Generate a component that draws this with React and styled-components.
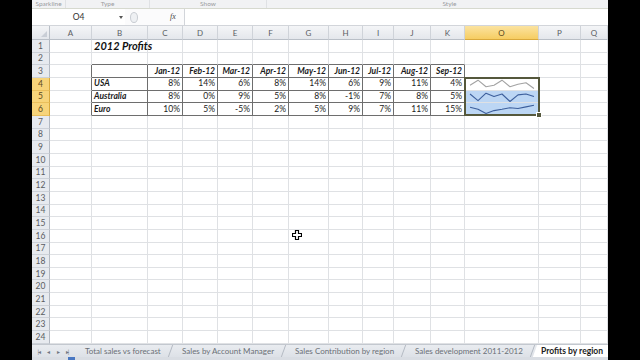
import React from 'react'
import styled, { createGlobalStyle, css } from 'styled-components'

const GlobalStyle = createGlobalStyle`
  html, body { margin: 0; padding: 0; background: #000; }
  body { font-family: Lato, 'Liberation Sans', sans-serif; }
`

const COLS = ['A', 'B', 'C', 'D', 'E', 'F', 'G', 'H', 'I', 'J', 'K', 'O', 'P', 'Q']
const WIDTHS = [42, 56, 35, 35, 35, 36, 40, 34, 31, 37, 34, 74, 42]
const ROW_COUNT = 24
const ROW_H = 12.67
const SPARK_COL = 11
const MONTHS = ['Jan-12', 'Feb-12', 'Mar-12', 'Apr-12', 'May-12', 'Jun-12', 'Jul-12', 'Aug-12', 'Sep-12']
const DATA = [
  { name: 'USA', values: [8, 14, 6, 8, 14, 6, 9, 11, 4], line: '#a3a3a3' },
  { name: 'Australia', values: [8, 0, 9, 5, 8, -1, 7, 8, 5], line: '#3d5f9c' },
  { name: 'Euro', values: [10, 5, -5, 2, 5, 9, 7, 11, 15], line: '#3d5f9c' }
]
const TABS = ['Total sales vs forecast', 'Sales by Account Manager', 'Sales Contribution by region', 'Sales development 2011-2012', 'Profits by region']

// table B3:K6 gets dark borders
const inTable = (r, c) => r >= 3 && r <= 6 && c >= 1 && c <= 10

const cellContent = (r, c) => {
  if (r === 1 && c === 1) return { text: '2012 Profits', title: true }
  if (r === 3 && c >= 2 && c <= 10) return { text: MONTHS[c - 2], head: true, align: 'right' }
  if (r >= 4 && r <= 6) {
    const row = DATA[r - 4]
    if (c === 1) return { text: row.name, head: true, align: 'left' }
    if (c >= 2 && c <= 10) return { text: row.values[c - 2] + '%', align: 'right' }
  }
  return null
}

const Sparkline = ({ values, color }) => {
  const w = 74
  const h = ROW_H
  const min = Math.min(...values)
  const max = Math.max(...values)
  const pts = values.map((v, i) => {
    const x = 5 + (i * (w - 10)) / (values.length - 1)
    const y = 2.2 + ((max - v) / (max - min)) * (h - 4.4)
    return `${x.toFixed(1)},${y.toFixed(1)}`
  })
  return (
    <SparkSvg width={w} height={h} viewBox={`0 0 ${w} ${h}`}>
      <polyline points={pts.join(' ')} fill='none' stroke={color} strokeWidth='1.1' strokeLinejoin='round' />
    </SparkSvg>
  )
}

export default function App() {
  const rows = []
  for (let r = 1; r <= ROW_COUNT; r++) {
    const active = r >= 4 && r <= 6
    rows.push(<RowHeader key={'h' + r} $active={active}>{r}</RowHeader>)
    COLS.forEach((col, c) => {
      const content = cellContent(r, c)
      const darkRight = inTable(r, c) || inTable(r, c + 1)
      const darkBottom = inTable(r, c) || inTable(r + 1, c)
      const spark = c === SPARK_COL && active ? DATA[r - 4] : null
      rows.push(
        <Cell
          key={r + col}
          $darkRight={darkRight}
          $darkBottom={darkBottom}
          $fill={c === SPARK_COL && (r === 5 || r === 6)}
          $align={content && content.align}
          $head={content && content.head}
          $title={content && content.title}
        >
          {content && content.text}
          {spark && <Sparkline values={spark.values} color={spark.line} />}
        </Cell>
      )
    })
  }

  return (
    <Screen>
      <GlobalStyle />
      <Window>
        <RibbonLabels>
          <RibbonGroup $w={34}>Sparkline</RibbonGroup>
          <RibbonGroup $w={84}>Type</RibbonGroup>
          <RibbonGroup $w={117}>Show</RibbonGroup>
          <RibbonGroup $w={366}>Style</RibbonGroup>
        </RibbonLabels>
        <FormulaBar>
          <NameBox>
            <span>O4</span>
            <DropArrow />
          </NameBox>
          <Grip />
          <Fx>fx</Fx>
          <FormulaInput />
        </FormulaBar>
        <Sheet>
          <Corner><CornerMark /></Corner>
          {COLS.map((col, c) => (
            <ColHeader key={col} $active={c === SPARK_COL}>{col}</ColHeader>
          ))}
          {rows}
          <Selection>
            <FillHandle />
          </Selection>
        </Sheet>
        <TabBar>
          <TabNav>
            <NavGlyph>|◂</NavGlyph>
            <NavGlyph>◂</NavGlyph>
            <NavGlyph>▸</NavGlyph>
            <NavGlyph>▸|</NavGlyph>
          </TabNav>
          {TABS.map((t, i) => (
            <Tab key={t} $active={i === TABS.length - 1}><span>{t}</span></Tab>
          ))}
        </TabBar>
        <StatusStrip>
          <StripMark />
        </StatusStrip>
      </Window>
      <Cursor width='10' height='10' viewBox='0 0 10 10'>
        <path d='M3.5 0.5 H6.5 V3.5 H9.5 V6.5 H6.5 V9.5 H3.5 V6.5 H0.5 V3.5 H3.5 Z' fill='#fff' stroke='#000' strokeWidth='1.2' />
      </Cursor>
    </Screen>
  )
}

const Screen = styled.div`
  position: relative;
  width: 640px;
  height: 360px;
  background: #000;
  display: flex;
  justify-content: center;
  overflow: hidden;
`
const Window = styled.div`
  width: 576px;
  height: 360px;
  display: flex;
  flex-direction: column;
  background: #fff;
  overflow: hidden;
`
const RibbonLabels = styled.div`
  height: 9px;
  flex: 0 0 9px;
  display: flex;
  background: #f1f2f4;
  border-bottom: 1px solid #d6d9cf;
  box-sizing: border-box;
`
const RibbonGroup = styled.div`
  flex: 0 0 ${props => props.$w}px;
  font-size: 6.5px;
  line-height: 8px;
  color: #9a9ca0;
  text-align: center;
  border-right: 1px solid #dfe1e4;
  box-sizing: border-box;
`
const FormulaBar = styled.div`
  height: 17px;
  flex: 0 0 17px;
  display: flex;
  align-items: stretch;
  background: #fbfbfc;
  border-bottom: 1px solid #d2d5da;
  box-sizing: border-box;
`
const NameBox = styled.div`
  width: 93px;
  display: flex;
  align-items: center;
  font-size: 8.5px;
  color: #333;
  background: #fff;
  span {
    flex: 1;
    text-align: center;
    padding-left: 6px;
  }
`
const DropArrow = styled.div`
  width: 0;
  height: 0;
  margin-right: 2px;
  border-left: 2.5px solid transparent;
  border-right: 2.5px solid transparent;
  border-top: 3px solid #555;
`
const Grip = styled.div`
  width: 6px;
  height: 9px;
  margin: 3px 0 0 5px;
  border: 1px solid #c8ccd2;
  border-radius: 50%;
  background: #eef0f3;
`
const Fx = styled.div`
  margin-left: 32px;
  width: 14px;
  font-family: 'Liberation Serif', serif;
  font-style: italic;
  font-size: 8px;
  line-height: 15px;
  color: #444;
`
const FormulaInput = styled.div`
  flex: 1;
  background: #fff;
  border-left: 1px solid #d2d5da;
`
const Sheet = styled.div`
  position: relative;
  flex: 0 0 318px;
  display: grid;
  grid-template-columns: 18px ${WIDTHS.map(w => w + 'px').join(' ')} 1fr;
  grid-template-rows: 14px repeat(${ROW_COUNT}, ${ROW_H}px);
  background: #fff;
`
const headerBase = css`
  box-sizing: border-box;
  font-size: 8px;
  color: #5a5d62;
  display: flex;
  align-items: center;
  justify-content: center;
`
const Corner = styled.div`
  ${headerBase};
  background: linear-gradient(#f3f4f6, #e3e6eb);
  border-right: 1px solid #b9bfc7;
  border-bottom: 1px solid #b9bfc7;
  position: relative;
`
const CornerMark = styled.div`
  position: absolute;
  right: 2px;
  bottom: 2px;
  width: 0;
  height: 0;
  border-left: 6px solid transparent;
  border-bottom: 6px solid #c9ced6;
`
const ColHeader = styled.div`
  ${headerBase};
  background: ${props => props.$active ? 'linear-gradient(#fbe3a0, #f6cd62)' : 'linear-gradient(#f4f5f7, #e4e7ec)'};
  color: ${props => props.$active ? '#5b4a1e' : '#5a5d62'};
  border-right: 1px solid #cfd3d9;
  border-bottom: 1px solid ${props => props.$active ? '#d9a93c' : '#b9bfc7'};
`
const RowHeader = styled.div`
  ${headerBase};
  font-size: 8.5px;
  background: ${props => props.$active ? '#f7d47a' : '#e7eaef'};
  color: ${props => props.$active ? '#5b4a1e' : '#5a5d62'};
  border-right: 1px solid ${props => props.$active ? '#d9a93c' : '#b3b9c2'};
  border-bottom: 1px solid ${props => props.$active ? '#e9bf5c' : '#ccd1d8'};
`
const Cell = styled.div`
  position: relative;
  box-sizing: border-box;
  min-width: 0;
  padding: 0 2px;
  font-size: 8.5px;
  line-height: 11px;
  color: #1a1a1a;
  white-space: nowrap;
  display: flex;
  align-items: center;
  justify-content: ${props => props.$align === 'right' ? 'flex-end' : 'flex-start'};
  background: ${props => props.$fill ? '#bcd6f4' : 'transparent'};
  border-right: 1px solid ${props => props.$darkRight ? '#6e6e6e' : '#dfe1e4'};
  border-bottom: 1px solid ${props => props.$darkBottom ? '#6e6e6e' : '#dfe1e4'};
  ${props => props.$head && css`
    font-weight: 700;
    font-style: italic;
  `}
  ${props => props.$title && css`
    font-size: 11px;
    font-weight: 700;
    font-style: italic;
    color: #111;
    overflow: visible;
    z-index: 1;
  `}
`
const SparkSvg = styled.svg`
  position: absolute;
  left: 0;
  top: 0;
`
const Selection = styled.div`
  position: absolute;
  grid-column: 13 / 14;
  grid-row: 5 / 8;
  top: -1px;
  left: -1px;
  right: -1px;
  bottom: 0;
  border: 2px solid #55583c;
  pointer-events: none;
  z-index: 2;
`
const FillHandle = styled.div`
  position: absolute;
  right: -4px;
  bottom: -4px;
  width: 4px;
  height: 4px;
  background: #55583c;
  border: 1px solid #fff;
`
const TabBar = styled.div`
  flex: 0 0 13px;
  display: flex;
  align-items: stretch;
  background: linear-gradient(#e9ecf0, #dde1e7);
  border-top: 1px solid #c3c8cf;
  box-sizing: border-box;
  overflow: hidden;
`
const TabNav = styled.div`
  flex: 0 0 42px;
  display: flex;
  align-items: center;
  justify-content: space-around;
  padding: 0 2px;
  box-sizing: border-box;
`
const NavGlyph = styled.span`
  font-size: 6px;
  color: #707680;
  letter-spacing: -1px;
`
const Tab = styled.div`
  flex: 0 0 auto;
  padding: 0 ${props => props.$active ? 14 : 9}px 0 ${props => props.$active ? 6 : 11}px;
  margin-left: ${props => props.$active ? 2 : 0}px;
  font-size: ${props => props.$active ? 8.5 : 8}px;
  line-height: 12px;
  white-space: nowrap;
  color: ${props => props.$active ? '#1c1c1c' : '#6a6f76'};
  font-weight: ${props => props.$active ? 700 : 400};
  background: ${props => props.$active ? '#fff' : 'transparent'};
  border-right: 1px solid #b4bac3;
  transform: skewX(-20deg);
  & > span {
    display: inline-block;
    transform: skewX(20deg);
  }
`
const StatusStrip = styled.div`
  flex: 1;
  background: #d9dde3;
  position: relative;
`
const StripMark = styled.div`
  position: absolute;
  left: 36px;
  top: 0;
  width: 7px;
  height: 3px;
  background: #4a78c2;
`
const Cursor = styled.svg`
  position: absolute;
  left: 292px;
  top: 230px;
`
